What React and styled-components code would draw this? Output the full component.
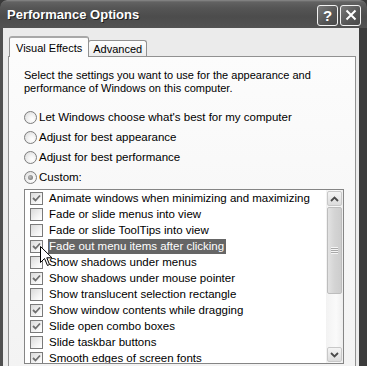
import React from "react";
import styled, { createGlobalStyle } from "styled-components";

const options = [
  { label: "Animate windows when minimizing and maximizing", on: true },
  { label: "Fade or slide menus into view", on: false },
  { label: "Fade or slide ToolTips into view", on: false },
  { label: "Fade out menu items after clicking", on: true, selected: true },
  { label: "Show shadows under menus", on: false },
  { label: "Show shadows under mouse pointer", on: true },
  { label: "Show translucent selection rectangle", on: false },
  { label: "Show window contents while dragging", on: true },
  { label: "Slide open combo boxes", on: true },
  { label: "Slide taskbar buttons", on: false },
  { label: "Smooth edges of screen fonts", on: true },
];

const modes = [
  { label: "Let Windows choose what's best for my computer", on: false },
  { label: "Adjust for best appearance", on: false },
  { label: "Adjust for best performance", on: false },
  { label: "Custom:", on: true },
];

export default function App() {
  return (
    <>
      <GlobalStyle />
      <Window>
        <TitleBar>
          <Title>Performance Options</Title>
          <Caps>
            <CapButton>?</CapButton>
            <CapButton>
              <svg width="12" height="12" viewBox="0 0 12 12">
                <path d="M1.5 1.5 L10.5 10.5 M10.5 1.5 L1.5 10.5" stroke="#fff" strokeWidth="2" />
              </svg>
            </CapButton>
          </Caps>
        </TitleBar>

        <Frame>
          <TabStrip>
            <Tab $active>Visual Effects</Tab>
            <Tab>Advanced</Tab>
          </TabStrip>

          <Panel>
            <Intro>
              Select the settings you want to use for the appearance and
              <br />
              performance of Windows on this computer.
            </Intro>

            <RadioGroup>
              {modes.map((m) => (
                <RadioRow key={m.label}>
                  <Radio $on={m.on} />
                  {m.label}
                </RadioRow>
              ))}
            </RadioGroup>

            <ListBox>
              <Items>
                {options.map((o) => (
                  <Item key={o.label}>
                    <Check>
                      {o.on && (
                        <svg width="9" height="9" viewBox="0 0 9 9">
                          <path d="M1 4 L3.5 6.5 L8 1.5" fill="none" stroke="#707070" strokeWidth="1.8" />
                        </svg>
                      )}
                    </Check>
                    <ItemLabel $selected={o.selected}>{o.label}</ItemLabel>
                  </Item>
                ))}
              </Items>
              <ScrollBar>
                <ScrollButton>
                  <svg width="9" height="6" viewBox="0 0 9 6">
                    <path d="M1 5 L4.5 1.5 L8 5" fill="none" stroke="#4a4a4a" strokeWidth="1.8" />
                  </svg>
                </ScrollButton>
                <Thumb>
                  <Grip />
                </Thumb>
                <Track />
                <ScrollButton>
                  <svg width="9" height="6" viewBox="0 0 9 6">
                    <path d="M1 1 L4.5 4.5 L8 1" fill="none" stroke="#4a4a4a" strokeWidth="1.8" />
                  </svg>
                </ScrollButton>
              </ScrollBar>
            </ListBox>
          </Panel>
        </Frame>

        <Pointer width="13" height="21" viewBox="0 0 13 21">
          <path
            d="M0.5 0.5 L0.5 16.5 L4.5 12.5 L7.5 19.5 L9.5 18.5 L6.8 11.8 L12 11.8 Z"
            fill="#fff"
            stroke="#000"
            strokeWidth="1"
          />
        </Pointer>
      </Window>
    </>
  );
}

const GlobalStyle = createGlobalStyle`
  html, body {
    margin: 0;
    background: #3a3a3a;
  }
  body {
    font-family: "Liberation Sans", Arial, sans-serif;
    font-size: 11px;
    color: #000;
  }
`;

const Window = styled.div`
  position: relative;
  width: 367px;
  height: 366px;
  overflow: hidden;
  display: flex;
  flex-direction: column;
  border-radius: 7px 7px 0 0;
  background: #3c3c3c;
`;

const TitleBar = styled.div`
  height: 28px;
  flex-shrink: 0;
  display: flex;
  align-items: center;
  padding: 0 6px 0 7px;
  border-radius: 7px 7px 0 0;
  background: linear-gradient(#8a8a8a 0, #626262 2px, #555 8px, #4c4c4c 60%, #525252 100%);
`;

const Title = styled.div`
  flex: 1;
  color: #fff;
  font-weight: bold;
  font-size: 13px;
  text-shadow: 1px 1px 0 #1e1e1e;
`;

const Caps = styled.div`
  display: flex;
  gap: 2px;
  margin-top: 2px;
`;

const CapButton = styled.div`
  width: 19px;
  height: 19px;
  border: 1px solid #f2f2f2;
  border-radius: 3px;
  background: linear-gradient(135deg, #7a7a7a, #555 60%, #4a4a4a);
  color: #fff;
  font-weight: bold;
  font-size: 15px;
  display: flex;
  align-items: center;
  justify-content: center;
`;

const Frame = styled.div`
  flex: 1;
  display: flex;
  flex-direction: column;
  background: #ebebeb;
  border-left: 3px solid #505050;
  border-right: 8px solid #3c3c3c;
  padding: 8px 3px 0 5px;
`;

const TabStrip = styled.div`
  display: flex;
  align-items: flex-end;
  height: 20px;
  padding-left: 1px;
  position: relative;
  z-index: 1;
`;

const Tab = styled.div`
  box-sizing: border-box;
  height: ${(p) => (p.$active ? "21px" : "16px")};
  margin-bottom: ${(p) => (p.$active ? "-1px" : "0")};
  padding: ${(p) => (p.$active ? "0 6px 0 6px" : "0 4px")};
  display: flex;
  align-items: center;
  border: 1px solid #919191;
  border-bottom: none;
  border-top: ${(p) => (p.$active ? "2px solid #a8a8a8" : "1px solid #919191")};
  border-radius: 3px 3px 0 0;
  background: ${(p) => (p.$active ? "#fcfcfc" : "linear-gradient(#fefefe, #ececec)")};
  font-size: 11px;
  margin-left: ${(p) => (p.$active ? "0" : "-1px")};
`;

const Panel = styled.div`
  flex: 1;
  border: 1px solid #919191;
  border-bottom: none;
  background: linear-gradient(#fcfcfc, #f3f3f3);
  padding: 12px 0 0 15px;
`;

const Intro = styled.div`
  line-height: 13px;
`;

const RadioGroup = styled.div`
  margin-top: 12px;
  display: flex;
  flex-direction: column;
`;

const RadioRow = styled.div`
  height: 20px;
  display: flex;
  align-items: center;
  gap: 2px;
  font-size: 11.5px;
`;

const Radio = styled.div`
  box-sizing: border-box;
  width: 13px;
  height: 13px;
  border-radius: 50%;
  border: 1px solid #7c7c7c;
  background: radial-gradient(circle at 65% 65%, #fff 0, #f2f2f2 40%, #d6d6d6 100%);
  display: flex;
  align-items: center;
  justify-content: center;
  &::after {
    content: "";
    display: ${(p) => (p.$on ? "block" : "none")};
    width: 5px;
    height: 5px;
    border-radius: 50%;
    background: radial-gradient(circle at 40% 40%, #bbb, #6a6a6a);
  }
`;

const ListBox = styled.div`
  margin-top: 2px;
  width: 320px;
  height: 175px;
  box-sizing: border-box;
  border: 1px solid #858585;
  background: #fff;
  display: flex;
  overflow: hidden;
`;

const Items = styled.div`
  flex: 1;
  display: flex;
  flex-direction: column;
  overflow: hidden;
`;

const Item = styled.div`
  flex-shrink: 0;
  height: 16px;
  display: flex;
  align-items: center;
  padding-left: 5px;
  font-size: 11.5px;
`;

const Check = styled.div`
  box-sizing: border-box;
  width: 13px;
  height: 13px;
  border: 1px solid #7a7a7a;
  background: linear-gradient(135deg, #dadada, #f6f6f6 70%, #fff);
  display: flex;
  align-items: center;
  justify-content: center;
  margin-right: 5px;
`;

const ItemLabel = styled.span`
  height: 15px;
  line-height: 15px;
  padding: 0 2px 0 1px;
  background: ${(p) => (p.$selected ? "#666" : "transparent")};
  color: ${(p) => (p.$selected ? "#fff" : "#000")};
`;

const ScrollBar = styled.div`
  width: 17px;
  display: flex;
  flex-direction: column;
  background: linear-gradient(90deg, #f2f2f2, #fafafa 60%, #eee);
  padding: 1px 0;
`;

const ScrollButton = styled.div`
  box-sizing: border-box;
  height: 15px;
  flex-shrink: 0;
  margin: 0 1px;
  border: 1px solid #c8c8c8;
  border-radius: 2px;
  background: linear-gradient(#f4f4f4, #dcdcdc);
  display: flex;
  align-items: center;
  justify-content: center;
`;

const Thumb = styled.div`
  box-sizing: border-box;
  height: 87px;
  flex-shrink: 0;
  margin: 1px 1px 0;
  border: 1px solid #bdbdbd;
  border-radius: 2px;
  background: linear-gradient(90deg, #e2e2e2, #d4d4d4 50%, #cdcdcd);
  display: flex;
  align-items: center;
  justify-content: center;
`;

const Grip = styled.div`
  width: 7px;
  height: 7px;
  background: repeating-linear-gradient(#f5f5f5 0 1px, #a8a8a8 1px 2px);
`;

const Track = styled.div`
  flex: 1;
`;

const Pointer = styled.svg`
  position: absolute;
  left: 40px;
  top: 246px;
`;
